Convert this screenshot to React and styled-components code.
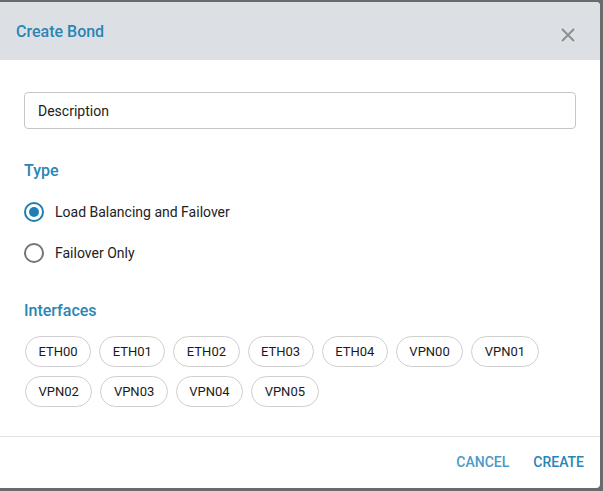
import React, { useState } from 'react'
import styled, { createGlobalStyle } from 'styled-components'

const GlobalStyle = createGlobalStyle`
    html, body {
        margin: 0;
        padding: 0;
        background: #6b6b6b;
        font-family: Roboto, "Liberation Sans", sans-serif;
    }
    * {
        box-sizing: border-box;
    }
`

const Page = styled.div`
    width: 603px;
    height: 491px;
    padding: 2px 3px 3px 0;
`

const Dialog = styled.div`
    width: 600px;
    height: 486px;
    background: #fff;
    border-radius: 0 4px 4px 0;
    overflow: hidden;
    display: flex;
    flex-direction: column;
`

const Header = styled.div`
    height: 58px;
    background: #dce0e4;
    display: flex;
    justify-content: space-between;
    align-items: center;
    padding: 0 25px 0 16px;
`

const Title = styled.h2`
    margin: 0;
    font-size: 16px;
    font-weight: 500;
    color: #2a85b5;
`

const CloseButton = styled.button`
    border: none;
    background: none;
    padding: 0;
    margin-top: 7px;
    width: 14px;
    height: 14px;
    display: flex;
    cursor: pointer;
`

const Body = styled.div`
    flex: 1;
    padding: 32px 24px 0 24px;
`

const Input = styled.input`
    width: 100%;
    height: 37px;
    border: 1px solid #c6c6c6;
    border-radius: 4px;
    padding: 0 13px;
    font-family: inherit;
    font-size: 14px;
    color: #222;
    outline: none;

    &::placeholder {
        color: #222;
    }
`

const SectionTitle = styled.div`
    font-size: 16px;
    font-weight: 500;
    color: #2a85b5;
    line-height: 19px;
    margin-top: ${p => p.$top}px;
`

const RadioRow = styled.label`
    display: flex;
    align-items: center;
    gap: 11px;
    height: 41px;
    font-size: 14px;
    color: #222;
    cursor: pointer;
`

const RadioCircle = styled.span`
    width: 20px;
    height: 20px;
    border-radius: 50%;
    border: 2px solid ${p => (p.$checked ? '#1f7fb1' : '#757575')};
    display: flex;
    align-items: center;
    justify-content: center;

    &::after {
        content: '';
        width: 10px;
        height: 10px;
        border-radius: 50%;
        background: ${p => (p.$checked ? '#1f7fb1' : 'transparent')};
    }
`

const RadioGroup = styled.div`
    margin-top: 11px;
`

const ChipList = styled.div`
    display: flex;
    flex-wrap: wrap;
    gap: 9px 8px;
    margin-top: 16px;
    padding-left: 1px;
`

const Chip = styled.button`
    height: 31px;
    padding: 0 12.5px;
    border: 1px solid #cfcfcf;
    border-radius: 16px;
    background: #fff;
    font-family: inherit;
    font-size: 13px;
    color: #1a1a1a;
    cursor: pointer;
`

const Footer = styled.div`
    height: 52px;
    border-top: 1px solid #e2e2e2;
    display: flex;
    justify-content: flex-end;
    align-items: center;
    gap: 8px;
    padding: 0 8px 1px 0;
`

const TextButton = styled.button`
    border: none;
    background: none;
    padding: 6px 8px;
    font-family: inherit;
    font-size: 14px;
    font-weight: 500;
    color: ${p => (p.$primary ? '#2a85b5' : '#4a9bc6')};
    cursor: pointer;
`

const interfaces = ['ETH00', 'ETH01', 'ETH02', 'ETH03', 'ETH04', 'VPN00', 'VPN01', 'VPN02', 'VPN03', 'VPN04', 'VPN05']

const types = ['Load Balancing and Failover', 'Failover Only']

const App = () => {
    const [type, setType] = useState(0)

    return (
        <>
            <GlobalStyle />
            <Page>
                <Dialog>
                    <Header>
                        <Title>Create Bond</Title>
                        <CloseButton aria-label="close">
                            <svg width="14" height="14" viewBox="0 0 14 14">
                                <path d="M1 1 L13 13 M13 1 L1 13" stroke="#8c8c8c" strokeWidth="1.8" />
                            </svg>
                        </CloseButton>
                    </Header>
                    <Body>
                        <Input placeholder="Description" />
                        <SectionTitle $top={32}>Type</SectionTitle>
                        <RadioGroup>
                            {types.map((t, i) => (
                                <RadioRow key={t} onClick={() => setType(i)}>
                                    <RadioCircle $checked={type === i} />
                                    {t}
                                </RadioRow>
                            ))}
                        </RadioGroup>
                        <SectionTitle $top={28}>Interfaces</SectionTitle>
                        <ChipList>
                            {interfaces.map(e => (
                                <Chip key={e}>{e}</Chip>
                            ))}
                        </ChipList>
                    </Body>
                    <Footer>
                        <TextButton>CANCEL</TextButton>
                        <TextButton $primary>CREATE</TextButton>
                    </Footer>
                </Dialog>
            </Page>
        </>
    )
}

export default App
